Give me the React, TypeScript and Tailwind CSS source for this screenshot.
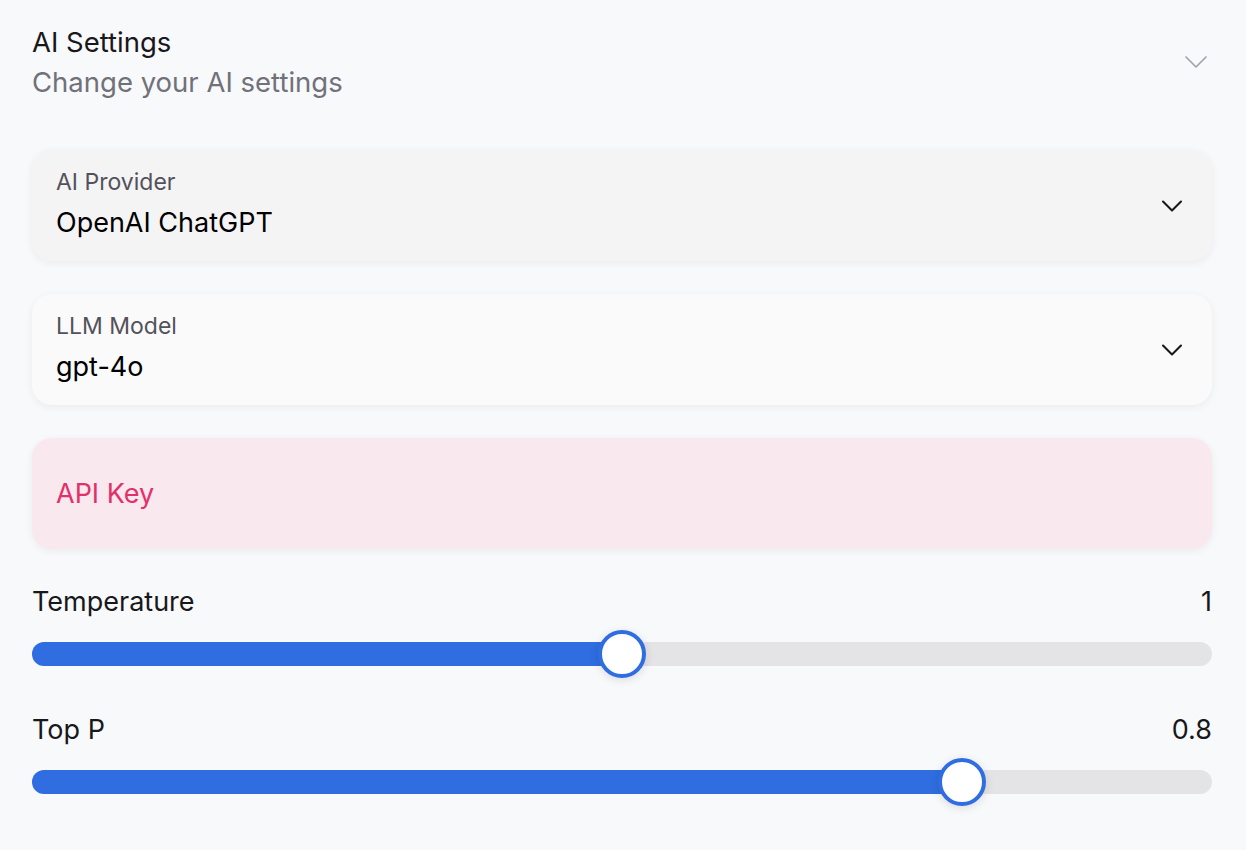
import React from 'react';

const Chevron = ({ className }: { className?: string }) => (
  <svg viewBox="0 0 24 24" fill="none" stroke="currentColor" strokeLinecap="round" strokeLinejoin="round" className={className}>
    <path d="m6 9 6 6 6-6" />
  </svg>
);

type SelectProps = { label: string; value: string; bg: string };

const SelectCard = ({ label, value, bg }: SelectProps) => (
  <div className={`h-[111px] rounded-[20px] ${bg} shadow-[0_2px_8px_rgba(0,0,0,0.06)] flex items-center justify-between pl-6 pr-[22px]`}>
    <div className="flex flex-col self-start pt-[18px]">
      <span className="text-[23px] leading-[28px] text-[#52525b]">{label}</span>
      <span className="mt-[11px] text-[27px] leading-[32px] text-black">{value}</span>
    </div>
    <Chevron className="w-9 h-9 text-[#18181b] stroke-[1.4]" />
  </div>
);

type SliderProps = { label: string; value: number; max: number };

const Slider = ({ label, value, max }: SliderProps) => {
  const pct = value / max;
  // thumb stays inside the track: 24px inset on both ends
  const pos = `calc(24px + (100% - 48px) * ${pct})`;
  return (
    <div className="flex flex-col">
      <div className="flex items-center justify-between text-[27px] leading-[32px] text-[#18181b]">
        <span>{label}</span>
        <span>{value}</span>
      </div>
      <div className="relative mt-6 h-6 rounded-full bg-[#e4e4e7]">
        <div className="absolute left-0 top-0 h-6 rounded-full bg-[#2f6de1]" style={{ width: pos }} />
        <div
          className="absolute top-1/2 w-12 h-12 -translate-x-1/2 -translate-y-1/2 rounded-full bg-white border-[4px] border-[#2f6de1] shadow-[0_2px_10px_rgba(0,0,0,0.12)]"
          style={{ left: pos }}
        />
      </div>
    </div>
  );
};

export default function App() {
  return (
    <div className="min-h-[850px] w-full bg-[#f8f9fb] pl-8 pr-[34px] pt-6 font-['Inter',sans-serif]">
      {/* Accordion header */}
      <div className="flex items-center justify-between">
        <div className="flex flex-col">
          <span className="text-[27.5px] leading-[36px] text-[#18181b]">AI Settings</span>
          <span className="mt-1 text-[27.5px] leading-[36px] text-[#71717a]">Change your AI settings</span>
        </div>
        <Chevron className="-mr-1 w-10 h-10 text-[#a1a1aa] stroke-[1]" />
      </div>

      <div className="mt-[50px] flex flex-col gap-[33px]">
        <SelectCard label="AI Provider" value="OpenAI ChatGPT" bg="bg-[#f4f4f5]" />
        <SelectCard label="LLM Model" value="gpt-4o" bg="bg-[#fafafa]" />
        <div className="h-[111px] rounded-[20px] bg-[#f9e8ee] shadow-[0_2px_8px_rgba(0,0,0,0.06)] flex items-center pl-6">
          <span className="text-[27px] leading-[32px] text-[#e2306a]">API Key</span>
        </div>
      </div>

      <div className="mt-[37px] flex flex-col gap-[48px]">
        <Slider label="Temperature" value={1} max={2} />
        <Slider label="Top P" value={0.8} max={1} />
      </div>
    </div>
  );
}
